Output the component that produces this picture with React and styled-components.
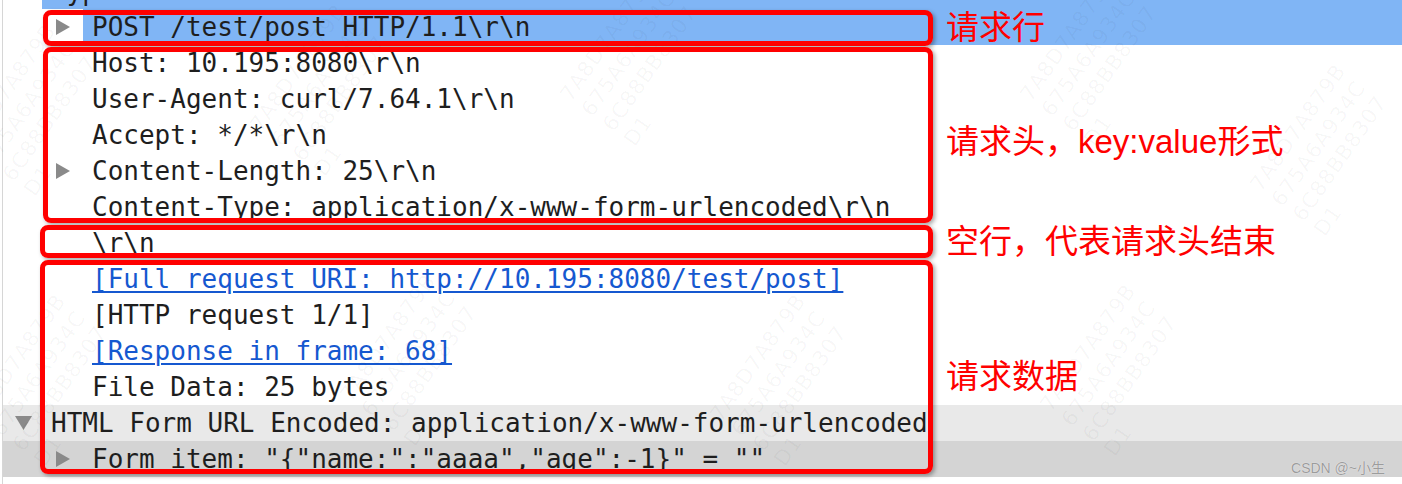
import React from "react";
import styled, { createGlobalStyle, css } from "styled-components";

const GlobalStyle = createGlobalStyle`
  html, body {
    margin: 0;
    padding: 0;
    background: #ffffff;
    overflow: hidden;
  }
`;

const rows = [
  { level: 0, toggle: "down", text: "Hypertext Transfer Protocol", selected: true },
  { level: 1, toggle: "right", text: "POST /test/post HTTP/1.1\\r\\n", selected: true },
  { level: 1, text: "Host: 10.195:8080\\r\\n" },
  { level: 1, text: "User-Agent: curl/7.64.1\\r\\n" },
  { level: 1, text: "Accept: */*\\r\\n" },
  { level: 1, toggle: "right", text: "Content-Length: 25\\r\\n" },
  { level: 1, text: "Content-Type: application/x-www-form-urlencoded\\r\\n" },
  { level: 1, text: "\\r\\n" },
  { level: 1, link: true, text: "[Full request URI: http://10.195:8080/test/post]" },
  { level: 1, text: "[HTTP request 1/1]" },
  { level: 1, link: true, text: "[Response in frame: 68]" },
  { level: 1, text: "File Data: 25 bytes" },
  {
    level: 0,
    toggle: "down",
    text: "HTML Form URL Encoded: application/x-www-form-urlencoded",
    tone: "light",
  },
  {
    level: 1,
    toggle: "right",
    text: 'Form item: "{"name:":"aaaa","age":-1}" = ""',
    tone: "dark",
  },
];

// red annotation frames drawn over the tree
const frames = [
  { left: 43, top: 10, width: 890, height: 36 },
  { left: 43, top: 47, width: 890, height: 176 },
  { left: 40, top: 225, width: 893, height: 33 },
  { left: 40, top: 260, width: 893, height: 214 },
];

const notes = [
  { top: 7, text: "请求行" },
  { top: 121, text: "请求头，key:value形式" },
  { top: 221, text: "空行，代表请求头结束" },
  { top: 356, text: "请求数据" },
];

const marks = [
  { x: 40, y: 110 },
  { x: 50, y: 380 },
  { x: 420, y: 360 },
  { x: 330, y: 90 },
  { x: 640, y: 60 },
  { x: 790, y: 380 },
  { x: 1100, y: 60 },
  { x: 1120, y: 370 },
  { x: 1330, y: 150 },
];

const App = () => {
  return (
    <>
      <GlobalStyle />
      <Screen>
        <Tree>
          {rows.map((row, i) => (
            <Row key={i} $level={row.level} $tone={row.tone}>
              <Toggle>{row.toggle && <Arrow dir={row.toggle} />}</Toggle>
              <Cell $selected={row.selected}>
                {row.link ? <Link>{row.text}</Link> : row.text}
              </Cell>
            </Row>
          ))}
        </Tree>

        <Watermarks>
          {marks.map((m, i) => (
            <Mark key={i} style={{ left: m.x, top: m.y }}>
              <span>7A8D7A879B</span>
              <span>675A6A934C</span>
              <span>6C88BB8307</span>
              <span>D1</span>
            </Mark>
          ))}
        </Watermarks>

        {frames.map((f, i) => (
          <Frame
            key={i}
            style={{ left: f.left, top: f.top, width: f.width, height: f.height }}
          />
        ))}

        {notes.map((n, i) => (
          <Note key={i} style={{ top: n.top }}>
            {n.text}
          </Note>
        ))}

        <Credit>CSDN @~小生</Credit>
      </Screen>
    </>
  );
};

const Arrow = ({ dir }) =>
  dir === "down" ? (
    <svg width="17" height="14" viewBox="0 0 17 14">
      <polygon points="0,0 17,0 8.5,14" fill="#8a8a8a" />
    </svg>
  ) : (
    <svg width="14" height="16" viewBox="0 0 14 16">
      <polygon points="0,0 14,8 0,16" fill="#8a8a8a" />
    </svg>
  );

const Screen = styled.div`
  position: relative;
  width: 1402px;
  height: 484px;
  overflow: hidden;
  background: #ffffff;
`;

const Tree = styled.div`
  margin-top: -27px;
  margin-left: 2px;
  border-left: 1px solid #d6d6d6;
  height: 520px;
  font-family: "DejaVu Sans Mono", "Liberation Mono", monospace;
  font-size: 26px;
  color: #1e1e1e;
`;

const Row = styled.div`
  display: flex;
  align-items: stretch;
  height: 36px;
  line-height: 36px;
  white-space: pre;
  padding-left: ${(p) => 11 + p.$level * 41}px;
  ${(p) =>
    p.$tone === "light" &&
    css`
      background: #e9e9e9;
    `}
  ${(p) =>
    p.$tone === "dark" &&
    css`
      background: #d4d4d4;
    `}
`;

const Toggle = styled.div`
  width: 28px;
  flex: none;
  display: flex;
  align-items: center;
  padding-left: 1px;
  box-sizing: border-box;
`;

const Cell = styled.div`
  flex: 1;
  padding-left: 9px;
  background: ${(p) => (p.$selected ? "#80b5f5" : "transparent")};
`;

const Link = styled.span`
  color: #1558d0;
  text-decoration: underline;
  text-decoration-thickness: 2px;
  text-underline-offset: 3px;
`;

const Watermarks = styled.div`
  position: absolute;
  inset: 0;
  pointer-events: none;
`;

const Mark = styled.div`
  position: absolute;
  display: flex;
  flex-direction: column;
  transform: translate(-50%, -50%) rotate(-55deg);
  font-family: "DejaVu Sans", "Noto Sans", sans-serif;
  font-size: 21px;
  line-height: 26px;
  letter-spacing: 1px;
  color: rgba(0, 0, 0, 0.04);
  white-space: nowrap;
`;

const Frame = styled.div`
  position: absolute;
  box-sizing: border-box;
  border: 5px solid #ff0000;
  border-radius: 8px;
  box-shadow: 2px 2px 4px rgba(0, 0, 0, 0.35);
`;

const Note = styled.div`
  position: absolute;
  left: 946px;
  font-family: "Liberation Sans", "Noto Sans CJK SC", sans-serif;
  font-size: 33px;
  line-height: 42px;
  color: #ff0000;
  white-space: nowrap;
`;

const Credit = styled.div`
  position: absolute;
  right: 17px;
  bottom: 7px;
  font-family: "Liberation Sans", "Noto Sans CJK SC", sans-serif;
  font-size: 14px;
  color: #9c9c9c;
  text-shadow: 0 0 1px #ffffff;
`;

export default App;
